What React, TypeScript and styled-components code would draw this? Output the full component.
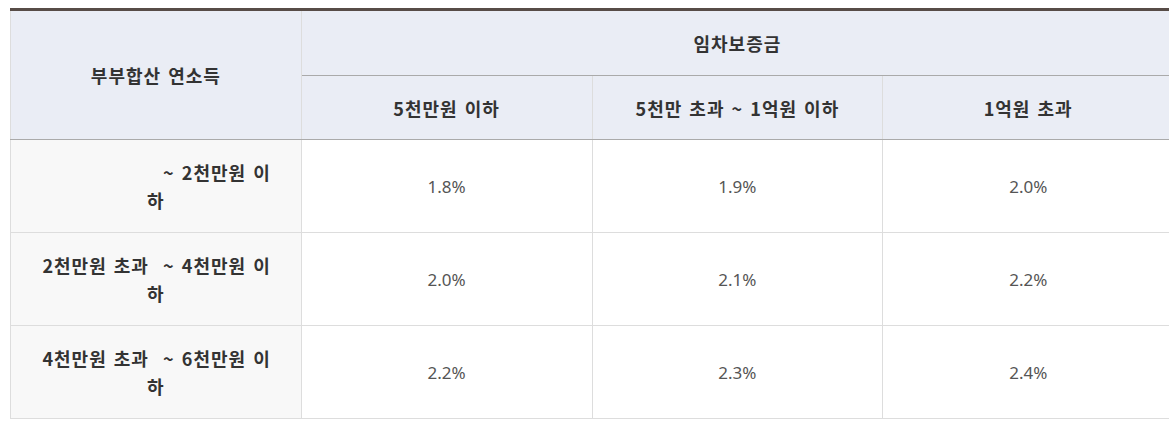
import styled, { createGlobalStyle } from 'styled-components'

const GlobalStyle = createGlobalStyle`
	html, body {
		margin: 0;
		padding: 0;
		background: #fff;
		overflow: hidden;
	}
	body {
		font-family: 'Noto Sans CJK KR', 'Noto Sans', sans-serif;
	}
`

const Wrap = styled.div`
	padding: 8px 0 0 10px;
`

const Table = styled.table`
	width: 1164px;
	border-collapse: collapse;
	table-layout: fixed;
	border-top: 3px solid #574c47;
	border-bottom: 1px solid #aaa;
`

const HeadCell = styled.th<{ $h: number }>`
	height: ${p => p.$h}px;
	padding: 0;
	background: #eaedf5;
	color: #333;
	font-size: 18px;
	font-weight: 700;
	letter-spacing: 1px;
	word-spacing: 2px;
	text-align: center;
	border: 1px solid #ddd;
	border-top: none;
	border-bottom: 1px solid #aaa;
`

const RangeCell = styled.td`
	height: 92px;
	padding: 0 30px;
	background: #f8f8f8;
	color: #333;
	font-size: 18px;
	font-weight: 700;
	letter-spacing: 1px;
	word-spacing: 2px;
	line-height: 28px;
	text-align: center;
	border: 1px solid #ddd;
	border-top: none;
`

const LineFirst = styled.div`
	text-align: right;
	white-space: pre;
`

const LineRest = styled.div`
	text-align: center;
`

const RateCell = styled.td`
	height: 92px;
	padding: 0;
	color: #555;
	font-family: 'Noto Sans', sans-serif;
	font-size: 17px;
	font-weight: 400;
	text-align: center;
	border: 1px solid #ddd;
	border-top: none;
	border-right: none;
`

const rows = [
	{ first: '~ 2천만원 이', rates: ['1.8%', '1.9%', '2.0%'] },
	{ first: '2천만원 초과  ~ 4천만원 이', rates: ['2.0%', '2.1%', '2.2%'] },
	{ first: '4천만원 초과  ~ 6천만원 이', rates: ['2.2%', '2.3%', '2.4%'] },
]

export default function App() {
	return (
		<Wrap>
			<GlobalStyle />
			<Table>
				<thead>
					<tr>
						<HeadCell rowSpan={2} $h={128}>
							부부합산 연소득
						</HeadCell>
						<HeadCell colSpan={3} $h={64}>
							임차보증금
						</HeadCell>
					</tr>
					<tr>
						<HeadCell $h={63}>5천만원 이하</HeadCell>
						<HeadCell $h={63}>5천만 초과 ~ 1억원 이하</HeadCell>
						<HeadCell $h={63}>1억원 초과</HeadCell>
					</tr>
				</thead>
				<tbody>
					{rows.map(r => (
						<tr key={r.first}>
							<RangeCell>
								<LineFirst>{r.first}</LineFirst>
								<LineRest>하</LineRest>
							</RangeCell>
							{r.rates.map((v, i) => (
								<RateCell key={i}>{v}</RateCell>
							))}
						</tr>
					))}
				</tbody>
			</Table>
		</Wrap>
	)
}
